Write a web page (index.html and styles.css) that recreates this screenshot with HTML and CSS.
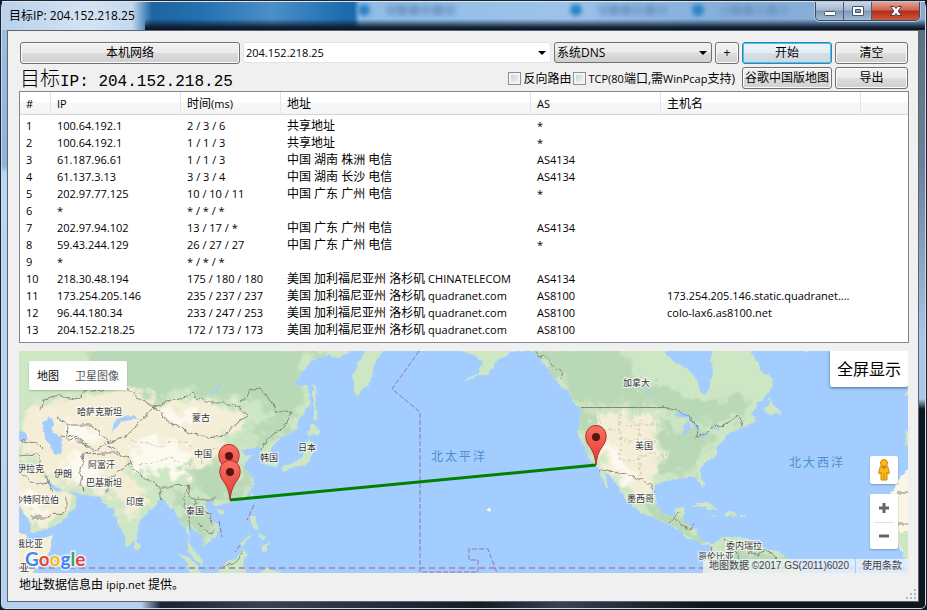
FILE: index.html
```html
<!DOCTYPE html>
<html lang="zh-CN">
<head>
<meta charset="utf-8">
<title>目标IP: 204.152.218.25</title>
<link rel="stylesheet" href="styles.css">
</head>
<body>
<div class="window">
  <header class="titlebar">
    <span class="caption">目标IP: 204.152.218.25</span>
    <div class="glass">
      <i class="tab"></i><i class="tab"></i><i class="tab"></i>
    </div>
    <div class="winbtns">
      <button class="wb" aria-label="最小化"><svg width="28" height="18" viewBox="0 0 28 18"><rect x="8.500" y="9.500" width="11" height="4" rx="1" fill="#fff" stroke="#4a5668"/></svg></button>
      <button class="wb" aria-label="最大化"><svg width="28" height="18" viewBox="0 0 28 18"><path fill-rule="evenodd" d="M8.500 4.500h11v9h-11zM11.500 7.500v3h5v-3z" fill="#fff" stroke="#4a5668"/></svg></button>
      <button class="wb wb-close" aria-label="关闭"><svg width="47" height="18" viewBox="0 0 47 18"><path d="M18.500 4.500h4l1.500 2 1.500-2h4l-3.300 4.500 3.300 4.500h-4l-1.500-2-1.500 2h-4l3.300-4.500z" fill="#fff" stroke="#5a3a40"/></svg></button>
    </div>
  </header>

  <main class="client">
    <form class="controls">
      <button type="button" class="btn local">本机网络</button>
      <span class="combo"><select aria-label="目标地址"><option>204.152.218.25</option></select></span>
      <span class="combo combo-btn"><select aria-label="DNS"><option>系统DNS</option></select></span>
      <button type="button" class="btn plus">+</button>
      <button type="button" class="btn primary">开始</button>
      <button type="button" class="btn">清空</button>
      <h1 class="target">目标<span>IP: 204.152.218.25</span></h1>
      <div class="checks">
        <label><input type="checkbox">反向路由</label>
        <label><input type="checkbox"><span>TCP(80</span>端口,需<span>WinPcap</span>支持)</label>
      </div>
      <button type="button" class="btn tight">谷歌中国版地图</button>
      <button type="button" class="btn">导出</button>
    </form>

    <div class="list">
      <table>
        <colgroup><col class="c-num"><col class="c-ip"><col class="c-time"><col class="c-addr"><col class="c-as"><col class="c-host"><col></colgroup>
        <thead><tr><th>#</th><th>IP</th><th><b>时间</b>(ms)</th><th><b>地址</b></th><th>AS</th><th><b>主机名</b></th><th></th></tr></thead>
        <tbody>
          <tr><td>1</td><td>100.64.192.1</td><td>2 / 3 / 6</td><td><b>共享地址</b></td><td>*</td><td></td><td></td></tr>
          <tr><td>2</td><td>100.64.192.1</td><td>1 / 1 / 3</td><td><b>共享地址</b></td><td>*</td><td></td><td></td></tr>
          <tr><td>3</td><td>61.187.96.61</td><td>1 / 1 / 3</td><td><b>中国 湖南 株洲 电信</b></td><td>AS4134</td><td></td><td></td></tr>
          <tr><td>4</td><td>61.137.3.13</td><td>3 / 3 / 4</td><td><b>中国 湖南 长沙 电信</b></td><td>AS4134</td><td></td><td></td></tr>
          <tr><td>5</td><td>202.97.77.125</td><td>10 / 10 / 11</td><td><b>中国 广东 广州 电信</b></td><td>*</td><td></td><td></td></tr>
          <tr><td>6</td><td>*</td><td>* / * / *</td><td></td><td></td><td></td><td></td></tr>
          <tr><td>7</td><td>202.97.94.102</td><td>13 / 17 / *</td><td><b>中国 广东 广州 电信</b></td><td>AS4134</td><td></td><td></td></tr>
          <tr><td>8</td><td>59.43.244.129</td><td>26 / 27 / 27</td><td><b>中国 广东 广州 电信</b></td><td>*</td><td></td><td></td></tr>
          <tr><td>9</td><td>*</td><td>* / * / *</td><td></td><td></td><td></td><td></td></tr>
          <tr><td>10</td><td>218.30.48.194</td><td>175 / 180 / 180</td><td><b>美国 加利福尼亚州 洛杉矶</b> CHINATELECOM</td><td>AS4134</td><td></td><td></td></tr>
          <tr><td>11</td><td>173.254.205.146</td><td>235 / 237 / 237</td><td><b>美国 加利福尼亚州 洛杉矶</b> quadranet.com</td><td>AS8100</td><td>173.254.205.146.static.quadranet....</td><td></td></tr>
          <tr><td>12</td><td>96.44.180.34</td><td>233 / 247 / 253</td><td><b>美国 加利福尼亚州 洛杉矶</b> quadranet.com</td><td>AS8100</td><td>colo-lax6.as8100.net</td><td></td></tr>
          <tr><td>13</td><td>204.152.218.25</td><td>172 / 173 / 173</td><td><b>美国 加利福尼亚州 洛杉矶</b> quadranet.com</td><td>AS8100</td><td></td><td></td></tr>
        </tbody>
      </table>
    </div>

    <section class="map" aria-label="路由地图">
      <svg class="world" viewBox="19 351 889 222" preserveAspectRatio="xMidYMid slice">
        <defs>
          <filter id="rough" x="-5%" y="-5%" width="110%" height="110%">
            <feTurbulence type="fractalNoise" baseFrequency="0.12" numOctaves="3" seed="4" result="n"/>
            <feDisplacementMap in="SourceGraphic" in2="n" scale="7" xChannelSelector="R" yChannelSelector="G"/>
          </filter>
          <filter id="patch" x="-10%" y="-10%" width="120%" height="120%">
            <feGaussianBlur stdDeviation="2" result="b"/>
            <feTurbulence type="fractalNoise" baseFrequency="0.07" numOctaves="4" seed="9" result="n"/>
            <feDisplacementMap in="b" in2="n" scale="30" xChannelSelector="R" yChannelSelector="G"/>
          </filter>
          <linearGradient id="pinfill" x1="0" y1="0" x2="0" y2="1"><stop offset="0" stop-color="#fb7064"/><stop offset="1" stop-color="#dc3b31"/></linearGradient>
          <g id="pin">
            <path d="M0 0C-1-11-4-15-8-21C-13-29-9-39.500 0-39.500C9-39.500 13-29 8-21C4-15 1-11 0 0Z" fill="url(#pinfill)" stroke="#b2302a"/>
            <circle cy="-28" r="4" fill="#591411"/>
          </g>
          <path id="asia" d="M10 340H365L348 353 340 357 325 356 312 360 304 370 295 382 300 388 308 385 309 405 300 420 292 432 280 440 271 448 272 454 278 460 277 466 268 468 263 458 262 450 255 446 249 449 241 450 245 455 252 456 246 461 244 466 249 473 254 480 252 490 243 498 230 502 222 505 216 505 210 500 204 504 208 514 218 525 218 534 211 541 204 545 203 537 197 532 191 524 188 538 192 549 200 556 204 567 196 561 188 549 187 532 180 521 175 508 168 506 161 497 157 504 148 512 138 525 135 540 128 545 122 534 115 515 113 508 108 508 102 500 95 496 82 494 70 492 62 490 55 486 46 478 49 486 58 492 66 489 77 500 75 510 62 522 45 530 32 533 28 520 19 505 10 490Z"/>
          <path id="africa" d="M10 520 20 530 30 541 54 535 50 550 38 565 30 580H10Z"/>
          <path id="america" d="M455 340 463 353 478 355 483 362 478 374 462 383 482 376 494 368 500 358 513 352 530 350 540 358 548 370 557 382 567 390 573 400 581 410 579 425 578 435 585 450 592 462 598 468 602 482 609 489 604 474 608 473 617 484 624 497 632 506 640 513 660 520 675 527 689 537 704 545 712 548 708 558 700 580H805L787 557 775 551 760 545 745 539 735 535 722 537 713 545 702 541 696 530 690 525 684 522 683 507 676 508 674 515 664 515 656 505 654 490 656 484 664 481 677 480 690 476 697 478 703 490 704 482 700 472 706 463 716 455 717 448 725 438 735 430 750 424 757 421 750 413 762 400 773 388 770 378 762 370 757 360 750 345H712L710 362 713 372 711 382 706 395 700 393 697 378 685 367 672 360 662 345Z"/>
          <clipPath id="landclip"><use href="#asia"/><use href="#america"/><use href="#africa"/></clipPath>
        </defs>
        <rect x="19" y="351" width="889" height="222" fill="#a3ccff"/>
        <g filter="url(#rough)">
          <g fill="#cde6c4">
            <use href="#asia"/><use href="#america"/><use href="#africa" fill="#f5efd5"/>
            <path d="M352 375 360 360 368 345H388L374 365 373 377 362 392 356 397Z"/>
            <path d="M312 383 317 392 315 405 318 420 312 419Z"/>
            <path d="M307 432 313 424 321 431 315 435 309 437Z"/>
            <path d="M309 438 314 450 309 464 300 466 291 469 283 472 281 467 292 464 301 458 306 449Z"/>
            <path d="M251 494 255 493 254 502ZM218 510H224V514H219Z"/>
            <path d="M250 515 256 516 255 525 259 530 252 528ZM258 533 266 536 263 540ZM260 547 268 543 268 551 262 552ZM240 545 250 533 251 535 242 547Z"/>
            <path d="M220 567 233 559 242 549 248 555 243 566 246 576H218Z"/>
            <path d="M179 553 190 558 204 576H193Z"/>
            <path d="M135 540 141 547 137 551 134 547Z"/>
            <path d="M258 573 268 568 282 573Z"/>
            <path d="M764 412 770 398 774 405 781 412 779 416Z"/>
            <path d="M692 504 702 501 719 510 709 509ZM723 513 730 511 738 516 726 517ZM711 515H716V517H711ZM741 515H745V517H741Z"/>
            <path d="M800 345H813L806 354Z"/>
            <path d="M488 509H491V512H488Z" fill="#f5f2e8"/>
            <path d="M903 397 915 380V394ZM905 430 915 432V440L905 446Z"/>
            <path d="M915 468 908 469 899 481 890 494 896 500 897 540 903 557 915 562Z" fill="#faf5e4"/>
            <path d="M897 532H915V566L903 557Z"/>
          </g>
        </g>
        <g clip-path="url(#landclip)">
          <g filter="url(#patch)">
            <g fill="#b9d9b6">
              <path d="M90 345H330L300 368 310 400 285 425 262 398 235 400 205 396 180 390 150 402 125 385 95 370Z"/>
              <path d="M200 460 235 465 250 480 240 500 210 500 190 480 178 462Z"/>
              <path d="M172 490 190 495 215 525 205 545 188 530Z"/>
              <path d="M530 345H620L640 380 670 395 720 400 745 395 752 412 720 425 690 420 650 403 600 405 575 400Z"/>
              <path d="M662 420 700 430 715 440 690 472 665 475Z"/>
              <path d="M640 495 690 525 710 548 800 556V573H700L660 525Z"/>
              <path d="M575 410 597 410 590 425 600 440 590 450 580 435Z"/>
              <path d="M210 445 250 440 250 425 285 410 290 430 270 440Z"/>
            </g>
            <g fill="#f4eed6">
              <path d="M19 415 50 400 90 395 125 388 155 404 185 400 215 402 250 410 240 430 220 438 225 450 200 465 165 470 120 465 135 480 115 492 55 482 19 450Z"/>
              <path d="M10 455 45 480 66 490 75 505 40 530 10 500Z"/>
              <path d="M115 480 150 490 145 505 125 520 115 500Z"/>
              <path d="M590 413 655 413 660 475 645 500 620 485 600 465Z"/>
            </g>
            <g fill="#fcf9ee">
              <path d="M130 440 180 440 200 455 180 476 140 468Z"/>
              <path d="M60 455 95 460 105 485 70 480Z"/>
              <path d="M20 490 50 500 40 520 25 512ZM60 415 105 430 95 445 65 440ZM160 408 200 415 190 428 165 420Z"/>
              <path d="M598 440 622 450 635 480 620 485Z"/>
            </g>
          </g>
        </g>
        <g fill="#a3ccff" filter="url(#rough)">
          <path d="M42 424 49 417 56 424 53 431 61 440 62 453 53 455 50 445 44 438Z"/>
          <path d="M15 429 26 433 27 440 15 441ZM111 432 116 421 123 417 121 422ZM119 417 134 416 138 420 123 422Z"/>
          <path d="M209 397 218 385 222 377 218 392Z"/>
          <path d="M674 415 684 411 693 417 684 419ZM684 436 684 424 690 421 687 436ZM692 420 700 428 696 433 693 426ZM698 436 710 430 705 436ZM711 428H719L713 431ZM648 383 652 398 649 395Z"/>
        </g>
        <g class="borders">
          <path filter="url(#rough)" d="M40 410 43 400 60 396 79 400 83 392 128 387 137 398 155 407 138 423 128 436 108 442 92 425 68 425 57 417M155 407 170 400 186 397 192 393 206 403 225 403 240 408 248 415 235 424 225 435 207 437 186 432 163 417 155 407M240 402 250 390 260 388 270 400 278 412 291 411 287 422 268 439 262 450M104 443 115 449 128 458 134 471 159 486 168 486 188 485 190 497 202 500 214 500M60 438 78 440 95 451 104 445M83 455 80 480 84 492M83 455 100 453 118 453M107 492 108 478 123 470 130 462M19 440 35 443 42 449M19 455 37 453 52 491M19 472 36 485 50 481M31 517 48 517 66 511 66 498M159 487 162 500M188 485 184 500 186 512 190 530M195 499 198 510 209 512 213 525M198 523 208 533 213 532M68 425 67 437 74 436 95 449M242 550 233 565 222 567"/>
          <path d="M581 407.500H663"/>
          <path filter="url(#rough)" d="M530 345 540 358 545 355 555 368 563 375 562 380M663 407L678 411 690 417 698 428 696 436 708 432 716 425 729 424 737 414 742 425M598 471 607 470 618 473 627 472 637 481 643 479 656 491M670 524 680 512M676 520 689 530 695 525M712 548 709 560M724 538 728 548 739 556 742 573M747 551 757 556 765 550 772 553 779 562M898 492H915M897 524H915"/>
        </g>
        <path class="provinces" filter="url(#rough)" d="M130 440 160 446 180 441 200 450 218 448M140 465 170 458 195 468M200 452 206 470 200 482M220 460 240 468M215 478 235 485 248 480M207 484 222 496M600 408V430H620V460M620 408V440H662M640 408V478M600 430 585 432M620 425H662M662 415V475M640 455H690M675 440V475M690 430V473M617 460H640M550 351V380M600 351 612 407M640 370V407M657 380V407"/>
        <g class="dateline">
          <path d="M419 351 392 389 420 412V572H478V560H469V549H488L497 573"/>
          <path d="M19 568H908" class="tropic"/>
          <path d="M254 505 247 520M240 545 235 552M219 521 222 537"/>
        </g>
        <path d="M230 500 596 465" stroke="#008000" stroke-width="3"/>
        <g class="labels">
          <text x="77" y="415">哈萨克斯坦</text><text x="192" y="421">蒙古</text><text x="194" y="457">中国</text>
          <text x="260" y="461">韩国</text><text x="298" y="451">日本</text><text x="88" y="468">阿富汗</text>
          <text x="54" y="477">伊朗</text><text x="86" y="486">巴基斯坦</text><text x="126" y="505">印度</text>
          <text x="186" y="514">泰国</text><text x="17" y="472">伊拉克</text><text x="14" y="503">沙特阿拉伯</text>
          <text x="16" y="547">俄比亚</text><text x="20" y="571">亚</text><text x="623" y="386">加拿大</text>
          <text x="635" y="449">美国</text><text x="627" y="502">墨西哥</text><text x="726" y="549">委内瑞拉</text><text x="698" y="560">哥伦比亚</text>
        </g>
        <g class="oceans"><text x="431" y="461">北太平洋</text><text x="789" y="467">北大西洋</text></g>
        <use href="#pin" x="229" y="484"/><use href="#pin" x="230" y="500"/><use href="#pin" x="596" y="465"/>
      </svg>
      <div class="maptype"><button class="on">地图</button><button>卫星图像</button></div>
      <button class="full">全屏显示</button>
      <div class="tools">
        <button class="peg" aria-label="街景"><svg width="14" height="22" viewBox="0 0 14 22"><g fill="#fdb714" stroke="#c98a10"><path d="M3.500 7h7l2 7-1.500 1-1-2v8h-6v-8l-1 2-1.500-1z"/><circle cx="7" cy="4" r="3.500"/></g><path d="M5 8h4l-2 2zM7 14v6" fill="#e8711c" stroke="#c98a10"/></svg></button>
        <div class="zoom"><button aria-label="放大"><svg width="12" height="12"><path d="M1 6h10M6 1v10" stroke="#666" stroke-width="3"/></svg></button><button aria-label="缩小"><svg width="12" height="12"><path d="M1 6h10" stroke="#666" stroke-width="3"/></svg></button></div>
      </div>
      <svg class="logo" width="70" height="26" viewBox="0 0 70 26"><text x="2" y="19"><tspan fill="#4285f4">G</tspan><tspan fill="#ea4335">o</tspan><tspan fill="#fbbc05">o</tspan><tspan fill="#4285f4">g</tspan><tspan fill="#34a853">l</tspan><tspan fill="#ea4335">e</tspan></text></svg>
      <div class="legal"><span>地图数据 ©2017 GS(2011)6020</span><a href="#terms">使用条款</a></div>
    </section>

    <footer class="status"><p>地址数据信息由 <span>ipip.net</span> 提供。</p>
      <svg class="grip" width="10" height="10" viewBox="0 0 10 10"><path d="M8 0h2v2h-2zM4 4h2v2h-2zM8 4h2v2h-2zM0 8h2v2h-2zM4 8h2v2h-2zM8 8h2v2h-2z" fill="#b8b8b8"/></svg>
    </footer>
  </main>
</div>
</body>
</html>
```
FILE: styles.css
```css
* { box-sizing: border-box; }
body {
  margin: 0;
  background: #10161f;
  color: #000;
  font: 11px/17px "Open Sans", "Noto Sans CJK SC", sans-serif;
}
button, select, input { font: inherit; color: inherit; margin: 0; }

.window {
  min-height: 100vh;
  display: flex;
  flex-direction: column;
  padding: 0 7px 7px 6px;
  border: 1px solid #1b2430;
  border-radius: 7px 7px 6px 6px;
  background:
    linear-gradient(#9fc0e0, #8fb4da 165px, #bcd6f1 172px, #b5d0ee) left / 7px 100% no-repeat,
    linear-gradient(#7f9cb8, #5e7080 30px, #6c8299 170px, #a9c6e6 340px, #a9c6e6 398px, #10181f 408px, #10181f) right / 7px 100% no-repeat,
    linear-gradient(90deg, #b5d0ee 140px, #1c2230 160px, #3a4152 260px, #161b26 480px, #39404f 560px, #10151d 700px) bottom / 100% 7px no-repeat,
    #10181f;
  box-shadow: inset 0 0 0 1px #c9dcee;
}

.titlebar {
  height: 29px;
  display: flex;
  margin: 0 -6px 0 -5px;
  border-top: 1px solid #dbe8f4;
  background:
    linear-gradient(transparent 17px, rgba(10, 25, 45, .9) 25px, #0c141f) 143px 0 / 100% 100% no-repeat,
    linear-gradient(90deg, #b9d1ea, #d5e4f3 90px, #c3d8ee 130px, #1d63a0 150px, #2571b0 200px, #4b8fc9 270px, #1b6bad 345px, #1b6bad 352px, #8fbce6 358px, #9cc4ea 560px, #86b0dc 700px, #88acd0);
}
.caption { flex: none; padding: 5px 0 0 7px; font-size: 12px; width: 148px; white-space: nowrap; }
.glass { flex: 1; display: flex; gap: 200px; padding: 2px 0 0 208px; overflow: hidden; }
.tab { flex: none; width: 12px; height: 12px; border-radius: 6px; background: #2d83c8; filter: blur(2px); box-shadow: 28px 0 3px #7ba5d0, 38px 0 3px #7099c4, 50px 0 3px #7099c4, 62px 0 3px #7ba5d0, 74px 0 3px #7099c4, 86px 0 3px #7ba5d0; }
.tab:last-child { margin-left: -90px; }
.winbtns { display: flex; height: 19px; margin-right: 5px; border: 1px solid #3c4b5d; border-top: 0; border-radius: 0 0 5px 5px; overflow: hidden; box-shadow: 0 0 0 1px #b8c8d8; }
.wb { width: 28px; padding: 0; border: 0; border-right: 1px solid #4b5c70; background: linear-gradient(#c9d8e8, #a3b8cf 45%, #7f98b4 50%, #a3bcd6); }
.wb svg { display: block; }
.wb-close { width: 47px; border: 0; background: linear-gradient(#e2a294, #cf6452 45%, #b52a1a 50%, #c85a42); }

.client {
  flex: 1;
  display: flex;
  flex-direction: column;
  padding: 11px 9px 0 11px;
  border: 1px solid #5b6470;
  background: #f0f0f0;
}
.controls {
  display: grid;
  grid-template-columns: 220px 1fr 158px 24px 90px 73px;
  grid-auto-rows: 22px;
  gap: 3px;
  padding: 0 1px;
}
.btn {
  padding: 0;
  border: 1px solid #707070;
  border-radius: 3px;
  box-shadow: inset 0 0 0 1px #fcfcfc;
  background: linear-gradient(#f2f2f2, #ebebeb 48%, #dddddd 52%, #cfcfcf);
  font-size: 12px;
  line-height: 18px;
  white-space: nowrap;
}
.primary { border-color: #3c7fb1; box-shadow: inset 0 0 0 1px #43c4f0; background: linear-gradient(#eef4f7, #e4edf2 48%, #d6dfe6 52%, #cbd7e0); }
.combo { position: relative; display: flex; }
.combo select { flex: 1; min-width: 0; height: 21px; padding: 0 2px; appearance: none; border: 1px solid #e2e3ea; border-radius: 2px; background: #fff; line-height: 17px; }
.combo::after { content: ""; position: absolute; right: 5px; top: 9px; border: 4px solid transparent; border-top-color: #000; border-bottom: 0; }
.combo-btn select { font-size: 12px; border-color: #707070; border-radius: 3px; background: linear-gradient(#f2f2f2, #ebebeb 48%, #dddddd 52%, #cfcfcf); }
.target { margin: 0; font: 300 20px/22px "Noto Sans CJK SC", sans-serif; white-space: nowrap; }
.target span { font: 400 16px/22px "Liberation Mono", monospace; }
.checks { grid-column: 2 / 5; display: flex; justify-content: flex-end; align-items: center; gap: 2px; padding-right: 4px; font-size: 12px; white-space: nowrap; }
.checks label { display: flex; align-items: center; }
.checks span { font-size: 11px; }
.checks input { width: 13px; height: 13px; margin-right: 2px; appearance: none; border: 1px solid #8e8f8f; background: linear-gradient(135deg, #c9cdd3, #f6f6f6); box-shadow: inset 0 0 0 2px #f4f4f4; }

.list { margin-top: 2px; padding-bottom: 4px; border: 1px solid #828790; background: #fff; }
table { width: 100%; table-layout: fixed; border-collapse: separate; border-spacing: 0; }
.c-num { width: 31px; }
.c-ip, .c-as { width: 130px; }
.c-time { width: 100px; }
.c-addr { width: 250px; }
.c-host { width: 200px; }
th, td { padding: 0 0 0 6px; text-align: left; font-weight: 400; white-space: nowrap; overflow: hidden; }
th { height: 23px; border-right: 1px solid #e2e3e6; border-bottom: 1px solid #d5d5d5; background: linear-gradient(#fff 45%, #f6f7f8 50%, #f3f4f5); }
th:last-child { border-right: 0; }
tbody::before { content: ""; display: block; height: 2px; }
td { height: 17px; }
td b, th b { font-size: 12px; font-weight: 400; }

.map { position: relative; flex: 1 0 222px; margin: 8px 1px 0 0; overflow: hidden; background: #a3ccff; }
.world { position: absolute; inset: 0; width: 100%; height: 100%; }
.borders { fill: none; stroke: #858580; stroke-width: 1; }
.provinces { fill: none; stroke: #c9c6b8; stroke-width: 1; stroke-dasharray: 3 2; }
.dateline { fill: none; stroke: #93799f; stroke-width: 1; stroke-dasharray: 5 2; }
.tropic { stroke: #a795b9; stroke-width: 2; stroke-dasharray: 6 4; }
.labels { font-size: 9px; fill: #333; paint-order: stroke; stroke: #fff; stroke-width: 2px; stroke-opacity: .8; }
.oceans { font-size: 12px; letter-spacing: 2px; fill: #4d90cc; }
.maptype { position: absolute; left: 10px; top: 10px; display: flex; height: 29px; border-radius: 2px; background: #fff; box-shadow: 0 1px 2px rgba(0, 0, 0, .2); }
.map button { border: 0; padding: 0 8px; background: #fff; color: #565656; }
.map .maptype button { border-radius: 2px; }
.map .maptype .on { color: #000; }
.map .full { position: absolute; right: 0; top: 0; height: 36px; padding: 0 7px; border-radius: 0 0 2px 2px; color: #000; font-size: 16px; box-shadow: 0 1px 3px rgba(0, 0, 0, .5); }
.tools { position: absolute; right: 10px; bottom: 24px; width: 28px; display: flex; flex-direction: column; gap: 10px; }
.map .tools button { display: flex; align-items: center; justify-content: center; width: 28px; height: 28px; padding: 0; border-radius: 2px; }
.peg, .zoom { border-radius: 2px; box-shadow: 0 1px 2px rgba(0, 0, 0, .25); }
.zoom { background: #fff; }
.map .zoom button + button { height: 27px; background: linear-gradient(#e0e0e0, #e0e0e0) center top / 20px 1px no-repeat; }
.logo { position: absolute; left: 4px; bottom: 0; font: 700 19px "Lato", sans-serif; paint-order: stroke; stroke: #fff; stroke-width: 3px; stroke-opacity: .7; }
.legal { position: absolute; right: 0; bottom: 0; display: flex; gap: 1px; height: 14px; font: 10px/14px "Liberation Sans", "Noto Sans CJK SC", sans-serif; color: #444; }
.legal span, .legal a { padding: 0 6px; background: rgba(240, 245, 250, .75); color: inherit; text-decoration: none; white-space: nowrap; }

.status { display: flex; justify-content: space-between; align-items: flex-start; height: 28px; font-size: 12px; }
.status p { margin: 3px 0 0; }
.status span { font-size: 11px; }
.grip { align-self: flex-end; margin: 0 -7px 2px 0; }
```
